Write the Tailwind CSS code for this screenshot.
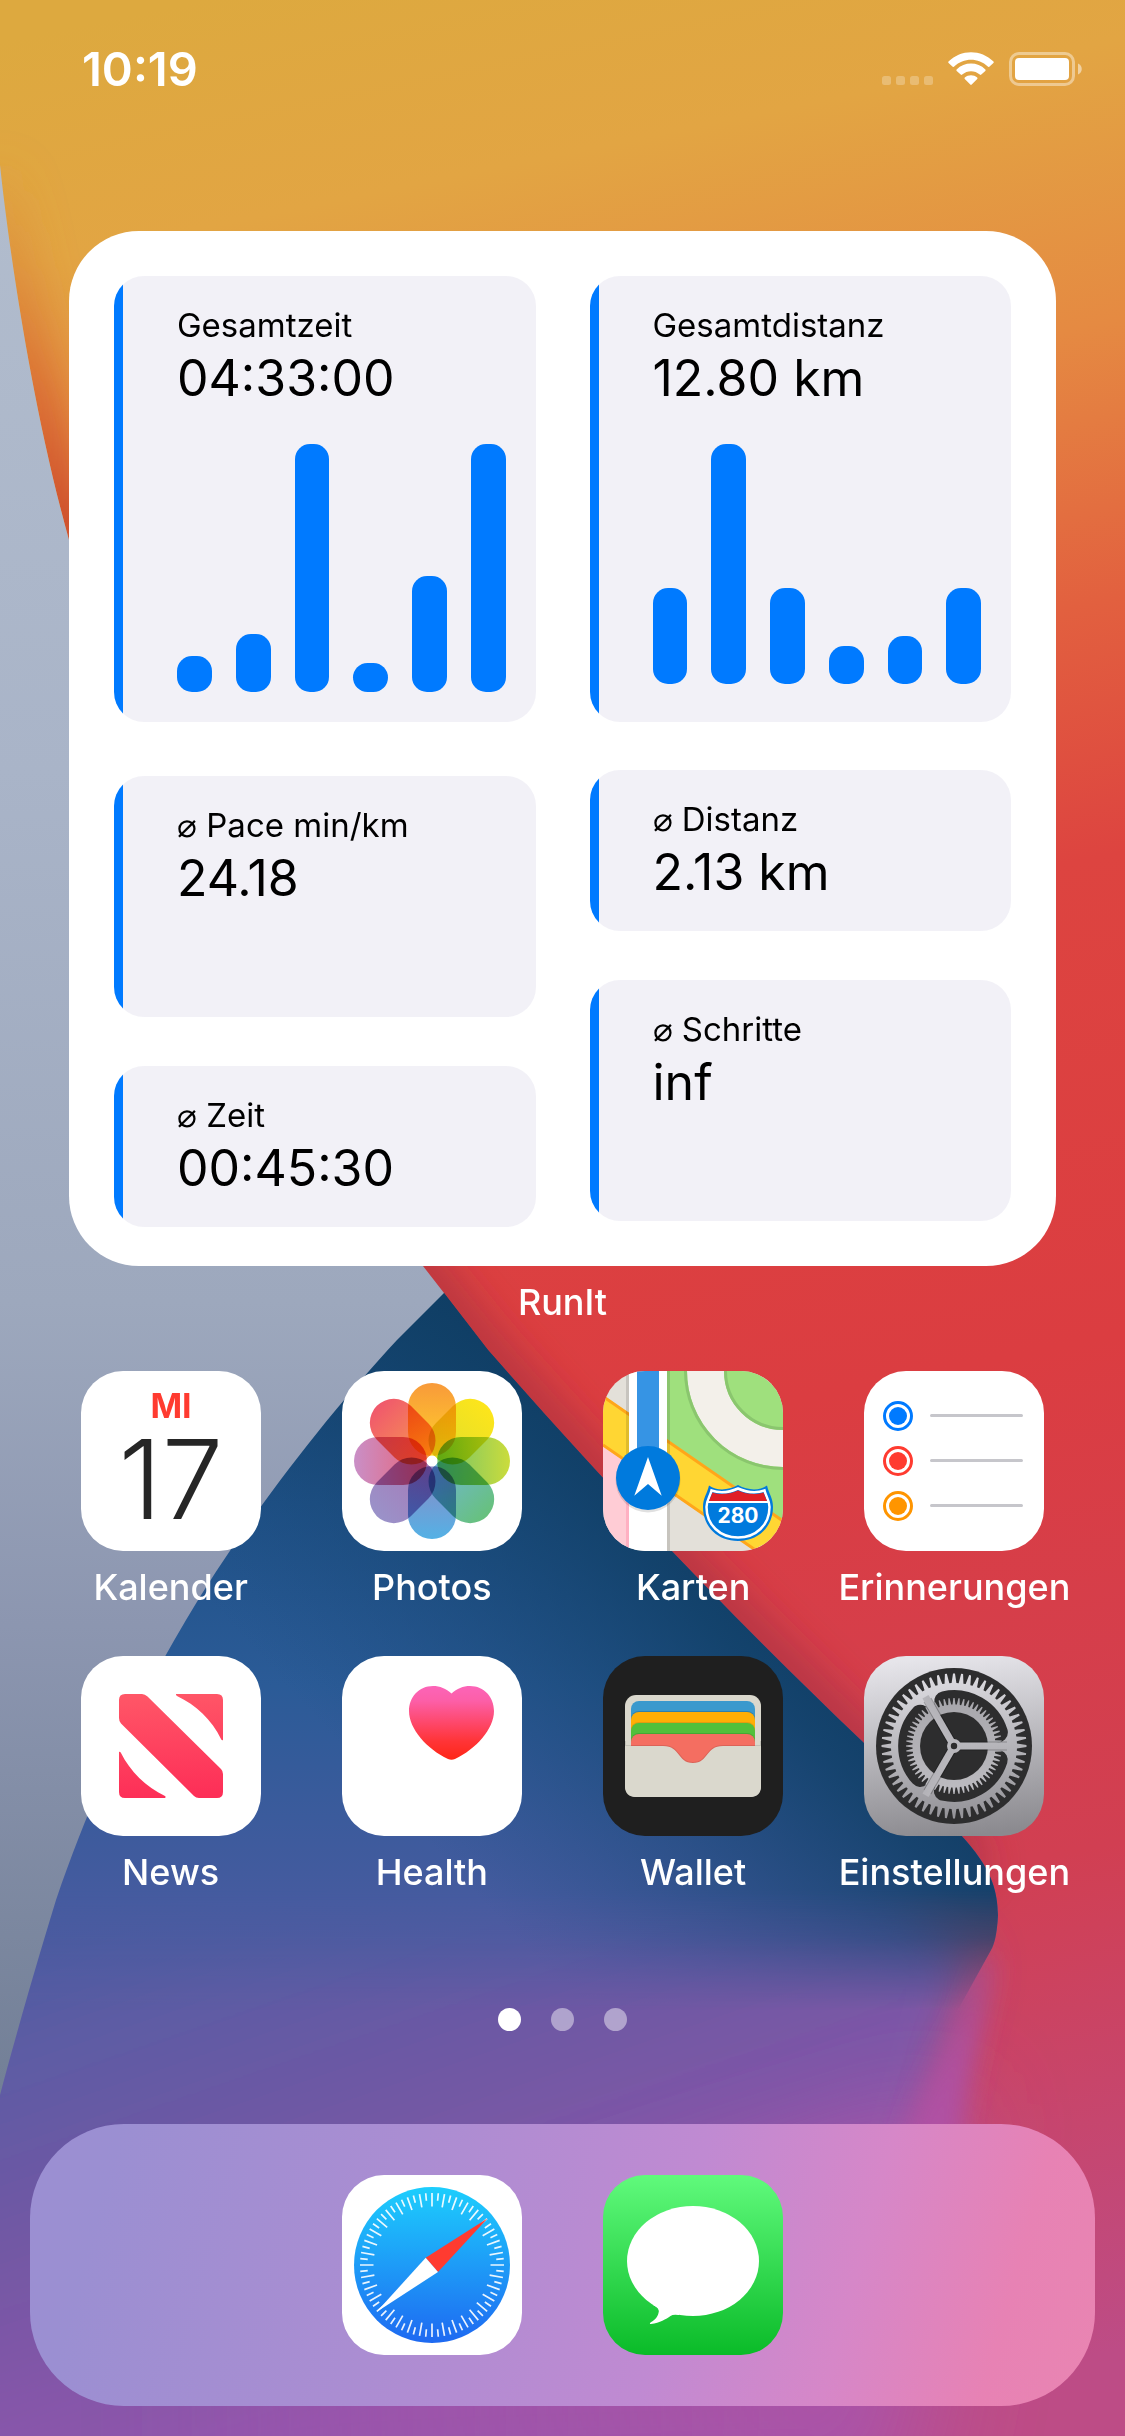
<!DOCTYPE html>
<html lang="de">
<head>
<meta charset="utf-8">
<meta name="viewport" content="width=device-width, initial-scale=1">
<title>Home</title>
<script src="https://cdn.jsdelivr.net/npm/@tailwindcss/browser@4"></script>
</head>
<body class="font-['Inter',sans-serif] bg-[#8a94ae]">
<div class="relative isolate flex min-h-screen flex-col overflow-hidden">

  <!-- Wallpaper -->
  <svg class="absolute inset-0 -z-10 h-full w-full" viewBox="0 0 1125 2436" preserveAspectRatio="none" aria-hidden="true">
    <defs>
      <linearGradient id="wGray" gradientUnits="userSpaceOnUse" x1="0" y1="200" x2="0" y2="2100"><stop offset="0" stop-color="#b1bccd"/><stop offset=".3" stop-color="#a9b4c8"/><stop offset=".58" stop-color="#9da8bd"/><stop offset=".75" stop-color="#8c96b0"/><stop offset="1" stop-color="#727f96"/></linearGradient>
      <linearGradient id="wRed" gradientUnits="userSpaceOnUse" x1="200" y1="0" x2="700" y2="2436"><stop offset="0" stop-color="#dda93f"/><stop offset=".09" stop-color="#e2a543"/><stop offset=".2" stop-color="#e58a42"/><stop offset=".31" stop-color="#e2603f"/><stop offset=".41" stop-color="#dd4440"/><stop offset=".6" stop-color="#db3d41"/><stop offset=".8" stop-color="#d13f52"/><stop offset="1" stop-color="#bd4c86"/></linearGradient>
      <linearGradient id="wEdge" gradientUnits="userSpaceOnUse" x1="0" y1="150" x2="0" y2="560"><stop offset="0" stop-color="#d9803a" stop-opacity="0"/><stop offset=".6" stop-color="#d8602f" stop-opacity=".8"/><stop offset="1" stop-color="#c8402c"/></linearGradient>
      <linearGradient id="wBlue" gradientUnits="userSpaceOnUse" x1="0" y1="1290" x2="0" y2="2050"><stop offset="0" stop-color="#104068"/><stop offset=".28" stop-color="#1f5187"/><stop offset=".52" stop-color="#2b5b97"/><stop offset=".8" stop-color="#455b9f"/><stop offset="1" stop-color="#555aa0"/></linearGradient>
      <linearGradient id="wNavy" gradientUnits="userSpaceOnUse" x1="830" y1="1580" x2="480" y2="1900"><stop offset="0" stop-color="#0d3a5e"/><stop offset=".25" stop-color="#103f66" stop-opacity=".85"/><stop offset="1" stop-color="#1a4a7c" stop-opacity="0"/></linearGradient>
      <linearGradient id="wPurple" gradientUnits="userSpaceOnUse" x1="0" y1="1900" x2="200" y2="2480"><stop offset="0" stop-color="#485ca1"/><stop offset=".25" stop-color="#5d5ba4"/><stop offset=".55" stop-color="#7358a4"/><stop offset="1" stop-color="#9455ad"/></linearGradient>
      <linearGradient id="wPink" gradientUnits="userSpaceOnUse" x1="150" y1="0" x2="800" y2="0"><stop offset="0" stop-color="#a553a9" stop-opacity="0"/><stop offset="1" stop-color="#ac53a6" stop-opacity=".95"/></linearGradient>
      <linearGradient id="wFade" gradientUnits="userSpaceOnUse" x1="0" y1="1890" x2="0" y2="2010"><stop offset="0" stop-color="#fff"/><stop offset=".4" stop-color="#fff" stop-opacity=".75"/><stop offset="1" stop-color="#fff" stop-opacity="0"/></linearGradient>
      <mask id="wMask" maskUnits="userSpaceOnUse" x="0" y="1200" width="1125" height="900"><rect y="1200" width="1125" height="900" fill="url(#wFade)"/></mask>
      <filter id="b20" x="-20%" y="-20%" width="140%" height="140%"><feGaussianBlur stdDeviation="20"/></filter>
      <filter id="b24" x="-20%" y="-20%" width="140%" height="140%"><feGaussianBlur stdDeviation="24"/></filter>
      <filter id="b12" x="-50%" y="-20%" width="200%" height="140%"><feGaussianBlur stdDeviation="13"/></filter>
      <filter id="b50" x="-60%" y="-60%" width="220%" height="220%"><feGaussianBlur stdDeviation="50"/></filter>
      <clipPath id="cRed"><path d="M0 0H1125V2436H0V2095L423 1266C260 980 130 740 69 540C30 400 8 240 0 165Z"/></clipPath>
      <clipPath id="cRight"><path d="M444 1293L488 1350C620 1500 735 1620 864 1743C960 1832 998 1860 998 1915C997 1935 994 1945 991 1950L960 2010V2436H1125V1200H300Z"/></clipPath>
    </defs>
    <rect width="1125" height="2436" fill="url(#wRed)"/>
    <g clip-path="url(#cRed)">
      <path d="M-10 165C8 300 30 400 75 560" fill="none" stroke="url(#wEdge)" stroke-width="60" filter="url(#b20)"/>
    </g>
    <g clip-path="url(#cRight)">
      <path d="M400 1240L488 1350C620 1500 735 1620 864 1743C940 1812 965 1840 970 1880" fill="none" stroke="#8c2b40" stroke-opacity=".6" stroke-width="30" filter="url(#b20)"/>
    </g>
    <path d="M-80 1700H700L900 1890L975 1960C950 2060 925 2150 880 2300L830 2520H-80Z" fill="url(#wPurple)" filter="url(#b24)"/>
    <path d="M150 2330L600 2210L880 2130L960 2100C940 2250 960 2300 900 2520H150Z" fill="url(#wPink)" filter="url(#b50)"/>
    <path d="M984 1955C978 2010 925 2070 900 2160L960 2160C960 2090 975 2040 990 1965Z" fill="#b052a6" fill-opacity=".9" filter="url(#b12)"/>
    <g mask="url(#wMask)">
      <path d="M444 1293L488 1350C620 1500 735 1620 864 1743C960 1832 998 1860 998 1915C997 1935 994 1945 991 1950L955 2015H-20V1293Z" fill="url(#wBlue)"/>
      <path d="M444 1293L488 1350C620 1500 735 1620 864 1743C960 1832 998 1860 998 1915C997 1935 994 1945 991 1950L955 2015H-20V1293Z" fill="url(#wNavy)"/>
    </g>
    <path d="M0 165C8 240 30 400 69 540C130 740 260 980 423 1266L444 1293L397 1340C330 1412 245 1520 186 1620C130 1715 90 1800 56 1900C30 1985 12 2050 0 2095Z" fill="url(#wGray)"/>
  </svg>

  <!-- Status bar -->
  <header class="flex items-center justify-between pt-[41px] pr-[43px] pl-[82px] text-white">
    <time class="text-[47px] leading-[56px] font-semibold">10:19</time>
    <svg class="h-[34px] w-[200px]" viewBox="0 0 200 34" role="img" aria-label="WLAN, Batterie voll">
      <g fill="#fff" fill-opacity=".26"><rect x="0" y="24" width="9" height="9" rx="2.5"/><rect x="14" y="24" width="9" height="9" rx="2.5"/><rect x="28" y="24" width="9" height="9" rx="2.5"/><rect x="42" y="24" width="9" height="9" rx="2.5"/></g>
      <g fill="#fff">
        <path d="M66.5 9.5C79 -3 99 -3 111.500 9.500Q112 10.200 111.400 11L107.300 14.700Q106.500 15.200 105.800 14.600C96.500 5.600 81.500 5.600 72.200 14.600Q71.500 15.200 70.700 14.700L66.600 11Q66 10.200 66.500 9.500Z"/>
        <path d="M74.600 17.500C82.500 9.600 95.500 9.600 103.400 17.500Q104 18.200 103.300 18.900L99.300 22.600Q98.500 23.200 97.800 22.600C92.800 18 85.200 18 80.200 22.600Q79.500 23.200 78.700 22.600L74.700 18.900Q74 18.200 74.600 17.500Z"/>
        <path d="M82.800 25.600C86.300 22.400 91.700 22.400 95.200 25.600Q95.900 26.300 95.200 27L89.700 32.600Q89 33.200 88.300 32.600L82.800 27Q82.100 26.300 82.800 25.600Z"/>
      </g>
      <rect x="128.500" y="1.500" width="63" height="31" rx="8.500" fill="none" stroke="#fff" stroke-opacity=".42" stroke-width="3"/>
      <rect x="133" y="6" width="54" height="22" rx="4" fill="#fff"/>
      <path d="M196 11.500C201 13.500 201 20.500 196 22.500Z" fill="#fff" fill-opacity=".5"/>
    </svg>
  </header>

  <main class="flex grow flex-col">
    <!-- Running statistics widget -->
    <section class="mx-[69px] mt-[134px] rounded-[70px] bg-white px-[45px] pt-[45px] pb-[39px] text-black" aria-label="RunIt">
      <div class="grid grid-cols-2 items-start gap-[54px]">
        <div class="flex flex-col">
          <article class="min-h-[446px] rounded-[30px] bg-[linear-gradient(to_right,#007aff_9px,#f2f1f7_9px)] pt-[29px] pr-[30px] pl-[63px]">
            <h2 class="text-[33px] leading-10">Gesamtzeit</h2>
            <p class="text-[50px] leading-[66px]">04:33:00</p>
            <div class="mt-[33px] flex h-[248px] items-end gap-6">
              <div class="grow rounded-[15px] bg-[#007aff]" style="height:36px"></div>
              <div class="grow rounded-[15px] bg-[#007aff]" style="height:58px"></div>
              <div class="grow rounded-[15px] bg-[#007aff]" style="height:248px"></div>
              <div class="grow rounded-[15px] bg-[#007aff]" style="height:29px"></div>
              <div class="grow rounded-[15px] bg-[#007aff]" style="height:116px"></div>
              <div class="grow rounded-[15px] bg-[#007aff]" style="height:248px"></div>
            </div>
          </article>
          <article class="mt-[54px] min-h-[241px] rounded-[30px] bg-[linear-gradient(to_right,#007aff_9px,#f2f1f7_9px)] pt-[29px] pr-[30px] pb-[26px] pl-[63px]">
            <h2 class="text-[33px] leading-10">⌀ Pace min/km</h2>
            <p class="text-[50px] leading-[66px]">24.18</p>
          </article>
          <article class="mt-[49px] min-h-[161px] rounded-[30px] bg-[linear-gradient(to_right,#007aff_9px,#f2f1f7_9px)] pt-[29px] pr-[30px] pb-[26px] pl-[63px]">
            <h2 class="text-[33px] leading-10">⌀ Zeit</h2>
            <p class="text-[50px] leading-[66px]">00:45:30</p>
          </article>
        </div>
        <div class="flex flex-col">
          <article class="min-h-[446px] rounded-[30px] bg-[linear-gradient(to_right,#007aff_9px,#f2f1f7_9px)] pt-[29px] pr-[30px] pl-[63px]">
            <h2 class="text-[33px] leading-10">Gesamtdistanz</h2>
            <p class="text-[50px] leading-[66px]">12.80 km</p>
            <div class="mt-[33px] flex h-[240px] items-end gap-6">
              <div class="grow rounded-[15px] bg-[#007aff]" style="height:96px"></div>
              <div class="grow rounded-[15px] bg-[#007aff]" style="height:240px"></div>
              <div class="grow rounded-[15px] bg-[#007aff]" style="height:96px"></div>
              <div class="grow rounded-[15px] bg-[#007aff]" style="height:38px"></div>
              <div class="grow rounded-[15px] bg-[#007aff]" style="height:48px"></div>
              <div class="grow rounded-[15px] bg-[#007aff]" style="height:96px"></div>
            </div>
          </article>
          <article class="mt-12 min-h-[161px] rounded-[30px] bg-[linear-gradient(to_right,#007aff_9px,#f2f1f7_9px)] pt-[29px] pr-[30px] pb-[26px] pl-[63px]">
            <h2 class="text-[33px] leading-10">⌀ Distanz</h2>
            <p class="text-[50px] leading-[66px]">2.13 km</p>
          </article>
          <article class="mt-[49px] min-h-[241px] rounded-[30px] bg-[linear-gradient(to_right,#007aff_9px,#f2f1f7_9px)] pt-[29px] pr-[30px] pb-[26px] pl-[63px]">
            <h2 class="text-[33px] leading-10">⌀ Schritte</h2>
            <p class="text-[50px] leading-[66px]">inf</p>
          </article>
        </div>
      </div>
    </section>
    <p class="mt-[14px] text-center text-[36px] leading-[44px] font-medium text-white">RunIt</p>

    <!-- App icons -->
    <nav class="mt-[47px] grid grid-cols-4 gap-y-[47px] px-10 text-[36px] leading-[44px] font-medium text-white" aria-label="Apps">
      <a href="#kalender" class="flex flex-col items-center gap-[14px]">
        <svg class="size-[180px] rounded-[42px] bg-white" viewBox="0 0 180 180" aria-hidden="true">
          <text x="90" y="47" text-anchor="middle" font-size="34" font-weight="700" fill="#ff3b30">MI</text>
          <text x="90" y="148" text-anchor="middle" font-size="110" font-weight="300" fill="#262626">17</text>
        </svg>
        <span class="whitespace-nowrap">Kalender</span>
      </a>
      <a href="#photos" class="flex flex-col items-center gap-[14px]">
        <svg class="size-[180px] rounded-[42px] bg-white" viewBox="0 0 180 180" aria-hidden="true">
          <defs>
            <linearGradient id="p0" x2="0" y2="1"><stop stop-color="#f89a3a"/><stop offset="1" stop-color="#ffd22a"/></linearGradient>
            <linearGradient id="p1" x2="0" y2="1"><stop stop-color="#fde51b"/><stop offset="1" stop-color="#dede2c"/></linearGradient>
            <linearGradient id="p2" x2="0" y2="1"><stop stop-color="#cbdc3c"/><stop offset="1" stop-color="#6cc26c"/></linearGradient>
            <linearGradient id="p3" x2="0" y2="1"><stop stop-color="#67c17c"/><stop offset="1" stop-color="#70b6d6"/></linearGradient>
            <linearGradient id="p4" x2="0" y2="1"><stop stop-color="#54b1e5"/><stop offset="1" stop-color="#8f88c4"/></linearGradient>
            <linearGradient id="p5" x2="0" y2="1"><stop stop-color="#9a92c9"/><stop offset="1" stop-color="#a878b6"/></linearGradient>
            <linearGradient id="p6" x2="0" y2="1"><stop stop-color="#c98fc7"/><stop offset="1" stop-color="#ea6274"/></linearGradient>
            <linearGradient id="p7" x2="0" y2="1"><stop stop-color="#f0586c"/><stop offset="1" stop-color="#f79a50"/></linearGradient>
          </defs>
          <g class="isolate">
            <rect class="mix-blend-multiply" x="66" y="12" width="48" height="73" rx="24" fill="url(#p0)"/>
            <rect class="mix-blend-multiply" x="66" y="12" width="48" height="73" rx="24" fill="url(#p1)" transform="rotate(45 90 90)"/>
            <rect class="mix-blend-multiply" x="66" y="12" width="48" height="73" rx="24" fill="url(#p2)" transform="rotate(90 90 90)"/>
            <rect class="mix-blend-multiply" x="66" y="12" width="48" height="73" rx="24" fill="url(#p3)" transform="rotate(135 90 90)"/>
            <rect class="mix-blend-multiply" x="66" y="12" width="48" height="73" rx="24" fill="url(#p4)" transform="rotate(180 90 90)"/>
            <rect class="mix-blend-multiply" x="66" y="12" width="48" height="73" rx="24" fill="url(#p5)" transform="rotate(225 90 90)"/>
            <rect class="mix-blend-multiply" x="66" y="12" width="48" height="73" rx="24" fill="url(#p6)" transform="rotate(270 90 90)"/>
            <rect class="mix-blend-multiply" x="66" y="12" width="48" height="73" rx="24" fill="url(#p7)" transform="rotate(315 90 90)"/>
          </g>
          <circle cx="90" cy="90" r="5.500" fill="#fff"/>
        </svg>
        <span class="whitespace-nowrap">Photos</span>
      </a>
      <a href="#karten" class="flex flex-col items-center gap-[14px]">
        <svg class="size-[180px] rounded-[42px] bg-[#e3e0d9]" viewBox="0 0 180 180" aria-hidden="true">
          <rect x="64" width="116" height="180" fill="#9fe07d"/>
          <path d="M0 75L180 199V180H0Z" fill="#e3e0d9"/>
          <path d="M0 75L26 93V180H0Z" fill="#ffccd5"/>
          <circle cx="180" r="77.500" fill="none" stroke="#f3f0ea" stroke-width="37"/>
          <circle cx="180" r="97.500" fill="none" stroke="#8ac66e" stroke-width="3"/>
          <circle cx="180" r="57.500" fill="none" stroke="#8ac66e" stroke-width="3"/>
          <path d="M0 24L180 149V199L0 75Z" fill="#ffd633"/>
          <path d="M0 25.500L180 150M0 74L180 198" stroke="#ffa61a" stroke-width="3"/>
          <path d="M23 0V180H26V0ZM64 0V180H67V0Z" fill="#000" fill-opacity=".12"/>
          <path d="M23 92H26V180H23Z" fill="#ffb0c2"/>
          <rect x="26" width="38" height="180" fill="#fff"/>
          <rect x="34" width="22" height="90" fill="#3694e4"/>
          <circle cx="45" cy="109" r="32.500" fill="#000" fill-opacity=".12"/>
          <circle cx="45" cy="107" r="32" fill="#007add"/>
          <path d="M45 86L58.700 124.700L45 113L31.300 124.700Z" fill="#fff"/>
          <path d="M106 114.500C114 120 125 119.500 135 114C145 119.500 156 120 164 114.500C166 123 170 127 170 136C170 156 155 170 135 170C115 170 100 156 100 136C100 127 104 123 106 114.500Z" fill="#007add"/>
          <path d="M108.500 119.500C117 122.500 126 121.500 135 117.500C144 121.500 153 122.500 161.500 119.500C163 126 166.500 129 166.500 136C166.500 154 153 166.500 135 166.500C117 166.500 103.500 154 103.500 136C103.500 129 107 126 108.500 119.500Z" fill="#007add" stroke="#fff" stroke-width="2.500"/>
          <path d="M109.500 121.500C118 124.500 127 123 135 119.500C143 123 152 124.500 160.500 121.500L164 130H106Z" fill="#e01f26"/>
          <rect x="105" y="130" width="60" height="2" fill="#fff"/>
          <text x="135" y="152" text-anchor="middle" font-size="21" font-weight="700" fill="#fff">280</text>
        </svg>
        <span class="whitespace-nowrap">Karten</span>
      </a>
      <a href="#erinnerungen" class="flex flex-col items-center gap-[14px]">
        <svg class="size-[180px] rounded-[42px] bg-white" viewBox="0 0 180 180" aria-hidden="true">
          <g fill="none" stroke-width="3"><circle cx="34" cy="45" r="13.500" stroke="#007aff"/><circle cx="34" cy="90" r="13.500" stroke="#ff3b30"/><circle cx="34" cy="135" r="13.500" stroke="#ff9500"/></g>
          <circle cx="34" cy="45" r="9" fill="#007aff"/><circle cx="34" cy="90" r="9" fill="#ff3b30"/><circle cx="34" cy="135" r="9" fill="#ff9500"/>
          <path d="M67.500 44.500H157.500M67.500 89.500H157.500M67.500 134.500H157.500" stroke="#c6c6cb" stroke-width="3" stroke-linecap="round"/>
        </svg>
        <span class="whitespace-nowrap">Erinnerungen</span>
      </a>
      <a href="#news" class="flex flex-col items-center gap-[14px]">
        <svg class="size-[180px] rounded-[42px] bg-white" viewBox="0 0 180 180" aria-hidden="true">
          <defs><linearGradient id="nw" gradientUnits="userSpaceOnUse" x1="85" y1="38" x2="90" y2="142"><stop stop-color="#ff5667"/><stop offset="1" stop-color="#fd2e57"/></linearGradient></defs>
          <g fill="url(#nw)">
            <path d="M44 38H61Q64 38 66.500 40.500L140 113Q142 115 142 118V136Q142 142 136 142H118Q115 142 113 140L40 67.500Q38 65.500 38 62V44Q38 38 44 38Z"/>
            <path d="M95 38H136Q142 38 142 44V84Q141 85 140 83C131 64 115 49 96 40Q94.500 39 95 38Z"/>
            <path d="M38 96Q39 95 40 97C49 115 65 131 84 140Q85.500 141 84 142H44Q38 142 38 136Z"/>
          </g>
        </svg>
        <span class="whitespace-nowrap">News</span>
      </a>
      <a href="#health" class="flex flex-col items-center gap-[14px]">
        <svg class="size-[180px] rounded-[42px] bg-white" viewBox="0 0 180 180" aria-hidden="true">
          <defs><linearGradient id="ht" x2="0" y2="1"><stop stop-color="#fc64b8"/><stop offset=".2" stop-color="#fc5fa8"/><stop offset=".75" stop-color="#ff3437"/><stop offset="1" stop-color="#ff2616"/></linearGradient></defs>
          <path d="M109.500 37.500C104 32.500 98 30 91 30C77 30 67 41 67 55C67 73 85 93 106 103Q109.500 104.500 113 103C134 93 152 73 152 55C152 41 142 30 128 30C121 30 115 32.500 109.500 37.500Z" fill="url(#ht)"/>
        </svg>
        <span class="whitespace-nowrap">Health</span>
      </a>
      <a href="#wallet" class="flex flex-col items-center gap-[14px]">
        <svg class="size-[180px] rounded-[42px] bg-[#1f1f1f]" viewBox="0 0 180 180" aria-hidden="true">
          <rect x="22" y="39" width="136" height="102" rx="11" fill="#dad8cd"/>
          <rect x="28" y="45" width="124" height="60" rx="8" fill="#3a99cd"/>
          <rect x="28" y="55" width="124" height="50" rx="8" fill="#2f7fab"/>
          <rect x="28" y="56" width="124" height="50" rx="8" fill="#ffae05"/>
          <rect x="28" y="66" width="124" height="40" rx="8" fill="#e39c10"/>
          <rect x="28" y="67" width="124" height="40" rx="8" fill="#51c03b"/>
          <rect x="28" y="77" width="124" height="36" rx="8" fill="#45a834"/>
          <rect x="28" y="78" width="124" height="40" rx="8" fill="#f46e61"/>
          <path d="M22 85V90H60C78 90 74 107 90 107C106 107 102 90 120 90H158V85" fill="none" stroke="#000" stroke-opacity=".1" stroke-width="2"/>
          <path d="M22 90H60C78 90 74 107 90 107C106 107 102 90 120 90H158V130Q158 141 147 141H33Q22 141 22 130Z" fill="#dad8cd"/>
        </svg>
        <span class="whitespace-nowrap">Wallet</span>
      </a>
      <a href="#einstellungen" class="flex flex-col items-center gap-[14px]">
        <svg class="size-[180px] rounded-[42px]" viewBox="0 0 180 180" aria-hidden="true">
          <defs>
            <linearGradient id="st" gradientUnits="userSpaceOnUse" x1="80" y1="0" x2="100" y2="180"><stop stop-color="#e6e5ea"/><stop offset=".5" stop-color="#b8b7bc"/><stop offset="1" stop-color="#8b8a8f"/></linearGradient>
            <linearGradient id="st2" gradientUnits="userSpaceOnUse" x1="90" y1="42" x2="90" y2="138"><stop stop-color="#a7a6ab"/><stop offset="1" stop-color="#bdbcc1"/></linearGradient>
          </defs>
          <rect width="180" height="180" fill="url(#st)"/>
          <circle cx="90" cy="90" r="78" fill="#2d2d2e"/>
          <path id="gear-outer" fill="url(#st)"/>
          <g fill="#2d2d2e" stroke="#2d2d2e" stroke-width="20" stroke-linejoin="round">
            <path d="M97.800 76.500L133.900 76.500A46 46 0 0 0 80.200 45.200L98 76.200Z"/>
            <path d="M97.800 76.500L133.900 76.500A46 46 0 0 0 80.200 45.200L98 76.200Z" transform="rotate(120 90 90)"/>
            <path d="M97.800 76.500L133.900 76.500A46 46 0 0 0 80.200 45.200L98 76.200Z" transform="rotate(240 90 90)"/>
          </g>
          <path id="gear-inner" fill="url(#st2)"/>
          <circle cx="90" cy="90" r="34" fill="#2d2d2e"/>
          <g stroke="#000" stroke-opacity=".25" stroke-width="9"><path d="M90 90H143"/><path d="M90 90H143" transform="rotate(120 90 90)"/><path d="M90 90H143" transform="rotate(240 90 90)"/></g>
          <g stroke="url(#st)" stroke-width="7"><path d="M90 90.010L147 90"/><path d="M90 90.010L147 90" transform="rotate(120 90 90)"/><path d="M90 90.010L147 90" transform="rotate(240 90 90)"/></g>
          <circle cx="90" cy="90" r="7" fill="#b8b7bc"/>
          <circle cx="90" cy="90" r="3.200" fill="#2d2d2e"/>
        </svg>
        <span class="whitespace-nowrap">Einstellungen</span>
      </a>
    </nav>

    <!-- Page indicator -->
    <div class="mt-[114px] flex justify-center gap-[30px]" role="img" aria-label="Seite 1 von 3">
      <span class="size-[23px] rounded-full bg-white"></span>
      <span class="size-[23px] rounded-full bg-white/45"></span>
      <span class="size-[23px] rounded-full bg-white/45"></span>
    </div>
  </main>

  <!-- Dock -->
  <footer class="mx-[30px] mt-[92px] mb-[30px] flex justify-center gap-[81px] rounded-[94px] bg-[linear-gradient(105deg,#9b8fd2_8%,#ab8dd2_35%,#c08ad2_60%,#d687c8_76%,#e782b4_90%,#e985b2)] py-[51px]">
    <a href="#safari" aria-label="Safari">
      <svg class="size-[180px] rounded-[42px] bg-white" viewBox="0 0 180 180" aria-hidden="true">
        <defs><linearGradient id="sf" x2="0" y2="1"><stop stop-color="#1dcefd"/><stop offset="1" stop-color="#1e69f1"/></linearGradient></defs>
        <circle cx="90" cy="90" r="78" fill="url(#sf)"/>
        <path id="ticks" stroke="#fff" stroke-opacity=".9" stroke-width="1.700"/>
        <path d="M145.700 43.300L83.700 82.700L96 97Z" fill="#ff3b30"/>
        <path d="M34.500 137L83.700 82.700L96 97Z" fill="#fff"/>
      </svg>
    </a>
    <a href="#nachrichten" aria-label="Nachrichten">
      <svg class="size-[180px] rounded-[42px] bg-[linear-gradient(#60fa7c,#0abb28)]" viewBox="0 0 180 180" aria-hidden="true">
        <ellipse cx="90" cy="86" rx="66" ry="55" fill="#fff"/>
        <path d="M50 130Q57 133 55.500 138C54.500 143 50.500 145.500 47.500 147.500Q46 149 48 149C57 148 63 144 67.500 141Q70 139 76 140L84 120Z" fill="#fff"/>
      </svg>
    </a>
  </footer>
</div>

<script>
  // Point on a circle around the icon centre
  const at = (r, a) => (90 + r * Math.cos(a)).toFixed(2) + ' ' + (90 + r * Math.sin(a)).toFixed(2);

  // Toothed wheel: n tapered teeth from radius base to radius tip
  function gear(n, base, tip) {
    const step = 2 * Math.PI / n;
    const pts = [];
    for (let i = 0; i < n; i++) {
      const a = i * step;
      pts.push(at(base, a - step * 0.34), at(tip, a - step * 0.12), at(tip, a + step * 0.12), at(base, a + step * 0.34));
    }
    return 'M' + pts.join('L') + 'Z';
  }
  document.getElementById('gear-outer').setAttribute('d', gear(56, 63, 72.500));
  document.getElementById('gear-inner').setAttribute('d', gear(60, 41.500, 48));

  // Compass ticks: one every five degrees, every second one long
  let d = '';
  for (let i = 0; i < 72; i++) {
    const a = i * Math.PI / 36;
    d += 'M' + at(72, a) + 'L' + at(i % 2 ? 64.500 : 58.500, a);
  }
  document.getElementById('ticks').setAttribute('d', d);
</script>
</body>
</html>
